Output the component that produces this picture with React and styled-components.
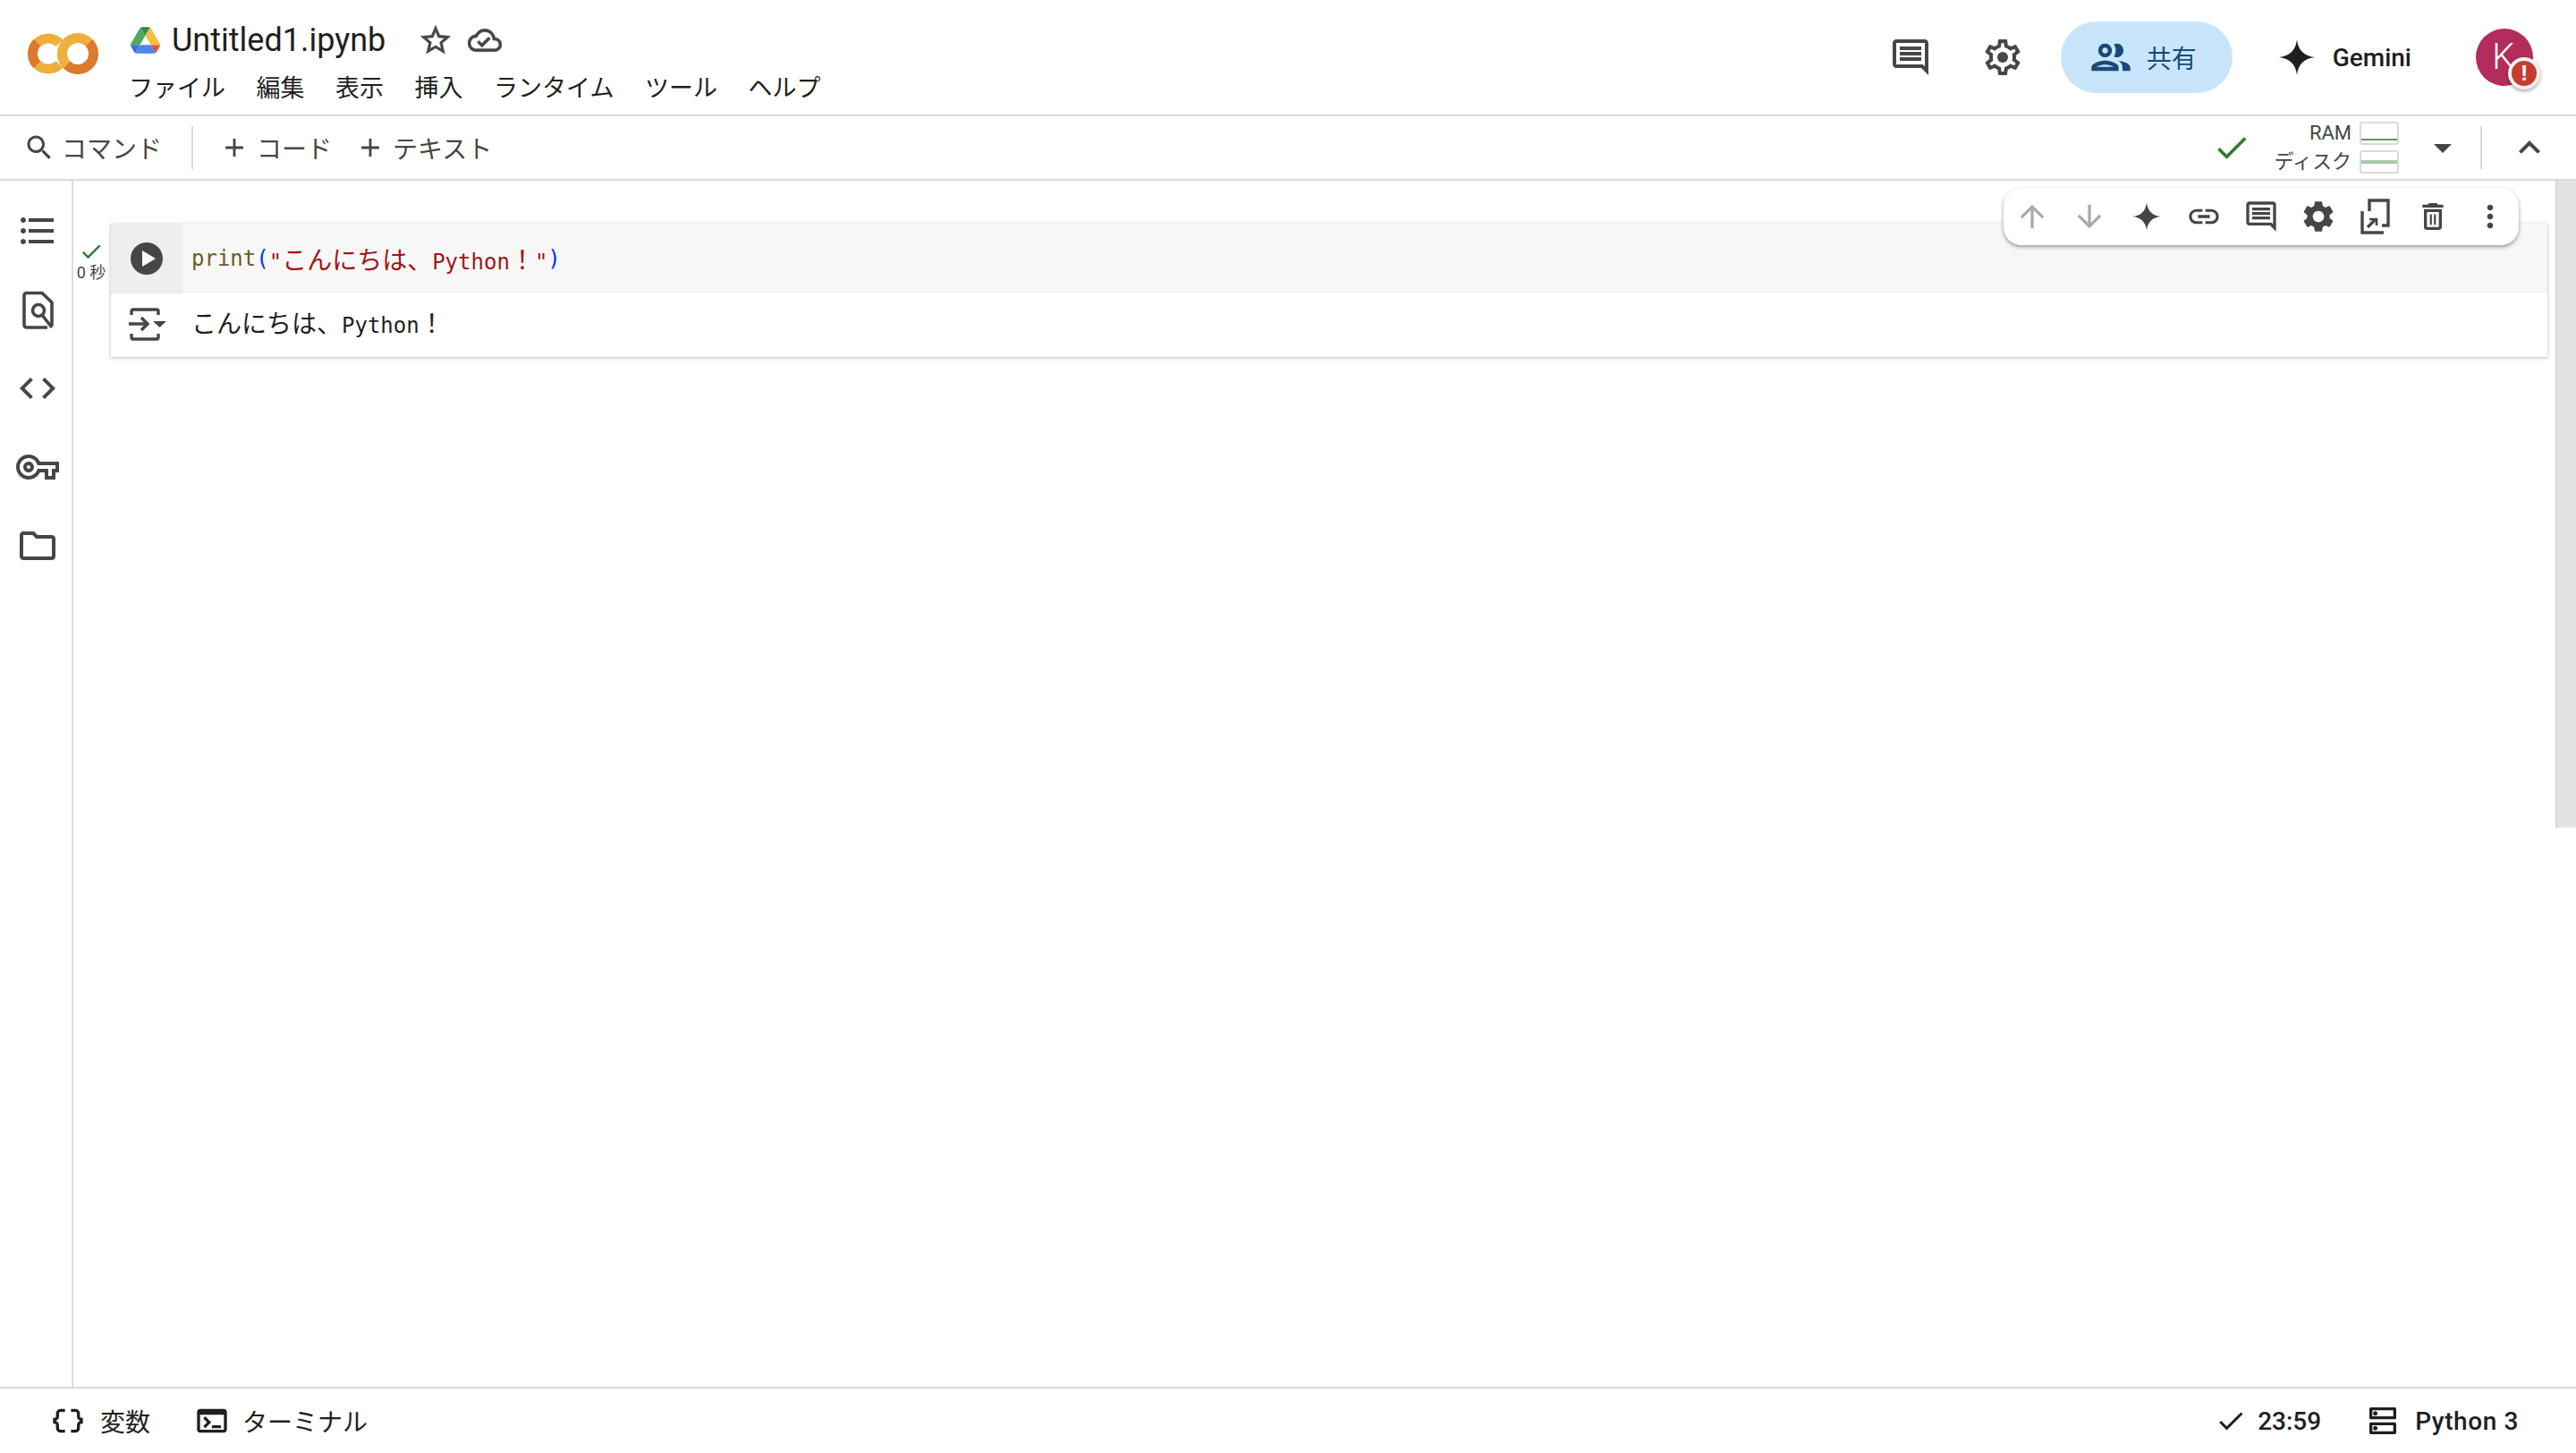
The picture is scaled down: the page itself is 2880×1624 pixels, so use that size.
import React from "react";
import styled, { createGlobalStyle } from "styled-components";

const GlobalStyle = createGlobalStyle`
  html, body { margin: 0; padding: 0; background: #fff; }
  body { font-family: "Roboto", "Noto Sans CJK JP", sans-serif; color: #1f1f1f; }
`;

// material icon paths
const paths = {
  chat: "M21.99 4c0-1.1-.89-2-1.99-2H4c-1.1 0-2 .9-2 2v12c0 1.1.9 2 2 2h14l4 4-.01-18zM20 4v13.17L18.83 16H4V4h16zM6 12h12v2H6zm0-3h12v2H6zm0-3h12v2H6z",
  gear: "M19.43 12.98c.04-.32.07-.64.07-.98 0-.34-.03-.66-.07-.98l2.11-1.65c.19-.15.24-.42.12-.64l-2-3.46c-.09-.16-.26-.25-.44-.25-.06 0-.12.01-.17.03l-2.49 1c-.52-.4-1.08-.73-1.69-.98l-.38-2.65C14.46 2.18 14.25 2 14 2h-4c-.25 0-.46.18-.49.42l-.38 2.65c-.61.25-1.17.59-1.69.98l-2.49-1c-.06-.02-.12-.03-.18-.03-.17 0-.34.09-.43.25l-2 3.46c-.13.22-.07.49.12.64l2.11 1.65c-.04.32-.07.65-.07.98 0 .33.03.66.07.98l-2.11 1.65c-.19.15-.24.42-.12.64l2 3.46c.09.16.26.25.44.25.06 0 .12-.01.17-.03l2.49-1c.52.4 1.08.73 1.69.98l.38 2.65c.03.24.24.42.49.42h4c.25 0 .46-.18.49-.42l.38-2.65c.61-.25 1.17-.59 1.69-.98l2.49 1c.06.02.12.03.18.03.17 0 .34-.09.43-.25l2-3.46c.12-.22.07-.49-.12-.64l-2.11-1.65zm-1.98-1.71c.04.31.05.52.05.73 0 .21-.02.43-.05.73l-.14 1.13.89.7 1.08.84-.7 1.21-1.27-.51-1.04-.42-.9.68c-.43.32-.84.56-1.25.73l-1.06.43-.16 1.13-.2 1.35h-1.4l-.19-1.35-.16-1.13-1.06-.43c-.43-.18-.83-.41-1.23-.71l-.91-.7-1.06.43-1.27.51-.7-1.21 1.08-.84.89-.7-.14-1.13c-.03-.31-.05-.54-.05-.74s.02-.43.05-.73l.14-1.13-.89-.7-1.08-.84.7-1.21 1.27.51 1.04.42.9-.68c.43-.32.84-.56 1.25-.73l1.06-.43.16-1.13.2-1.35h1.39l.19 1.35.16 1.13 1.06.43c.43.18.83.41 1.23.71l.91.7 1.06-.43 1.27-.51.7 1.21-1.07.85-.89.7.14 1.13z",
  gearFill: "M19.14 12.94c.04-.3.06-.61.06-.94 0-.32-.02-.64-.07-.94l2.03-1.58c.18-.14.23-.41.12-.61l-1.92-3.32c-.12-.22-.37-.29-.59-.22l-2.39.96c-.5-.38-1.03-.7-1.62-.94l-.36-2.54c-.04-.24-.24-.41-.48-.41h-3.84c-.24 0-.43.17-.47.41l-.36 2.54c-.59.24-1.13.57-1.62.94l-2.39-.96c-.22-.08-.47 0-.59.22L2.74 8.87c-.12.21-.08.47.12.61l2.03 1.58c-.05.3-.09.63-.09.94s.02.64.07.94l-2.03 1.58c-.18.14-.23.41-.12.61l1.92 3.32c.12.22.37.29.59.22l2.39-.96c.5.38 1.03.7 1.62.94l.36 2.54c.05.24.24.41.48.41h3.84c.24 0 .44-.17.47-.41l.36-2.54c.59-.24 1.13-.56 1.62-.94l2.39.96c.22.08.47 0 .59-.22l1.92-3.32c.12-.22.07-.47-.12-.61l-2.01-1.58zM12 15.6c-1.98 0-3.6-1.62-3.6-3.6s1.62-3.6 3.6-3.6 3.6 1.62 3.6 3.6-1.62 3.6-3.6 3.6z",
  link: "M3.9 12c0-1.71 1.39-3.1 3.1-3.1h4V7H7c-2.76 0-5 2.24-5 5s2.24 5 5 5h4v-1.9H7c-1.71 0-3.1-1.39-3.1-3.1zM8 13h8v-2H8v2zm9-6h-4v1.9h4c1.71 0 3.1 1.39 3.1 3.1s-1.39 3.1-3.1 3.1h-4V17h4c2.76 0 5-2.24 5-5s-2.24-5-5-5z",
  trash: "M6 19c0 1.1.9 2 2 2h8c1.1 0 2-.9 2-2V7H6v12zM8 9h8v10H8V9zm7.5-5l-1-1h-5l-1 1H5v2h14V4zM10 10.5h1.3v7H10zM12.7 10.5H14v7h-1.3z",
  more: "M12 8c1.1 0 2-.9 2-2s-.9-2-2-2-2 .9-2 2 .9 2 2 2zm0 2c-1.1 0-2 .9-2 2s.9 2 2 2 2-.9 2-2-.9-2-2-2zm0 6c-1.1 0-2 .9-2 2s.9 2 2 2 2-.9 2-2-.9-2-2-2z",
  up: "M4 12l1.41 1.41L11 7.83V20h2V7.83l5.58 5.59L20 12l-8-8-8 8z",
  down: "M20 12l-1.41-1.41L13 16.17V4h-2v12.17l-5.58-5.59L4 12l8 8 8-8z",
  star: "M22 9.24l-7.19-.62L12 2 9.19 8.63 2 9.24l5.46 4.73L5.82 21 12 17.27 18.18 21l-1.63-7.03L22 9.24zM12 15.4l-3.76 2.27 1-4.28-3.32-2.88 4.38-.38L12 6.1l1.71 4.04 4.38.38-3.32 2.88 1 4.28L12 15.4z",
  cloud: "M19.35 10.04C18.67 6.59 15.64 4 12 4 9.11 4 6.6 5.64 5.35 8.04 2.34 8.36 0 10.91 0 14c0 3.31 2.69 6 6 6h13c2.76 0 5-2.24 5-5 0-2.64-2.05-4.78-4.65-4.96zM19 18H6c-2.21 0-4-1.79-4-4 0-2.05 1.53-3.76 3.56-3.97l1.07-.11.5-.95C8.08 7.14 9.94 6 12 6c2.62 0 4.88 1.86 5.39 4.43l.3 1.5 1.53.11c1.56.1 2.78 1.41 2.78 2.96 0 1.65-1.35 3-3 3zm-9-3.82l-2.09-2.09L6.5 13.5 10 17l6.01-6.01-1.41-1.41z",
  people: "M9 13.75c-2.34 0-7 1.17-7 3.5V19h14v-1.75c0-2.33-4.66-3.5-7-3.5zM4.34 17c.84-.58 2.87-1.25 4.66-1.25s3.82.67 4.66 1.25H4.34zM9 12c1.93 0 3.5-1.57 3.5-3.5S10.93 5 9 5 5.5 6.57 5.5 8.5 7.07 12 9 12zm0-5c.83 0 1.5.67 1.5 1.5S9.83 10 9 10s-1.5-.67-1.5-1.5S8.17 7 9 7zm7.04 6.81c1.16.84 1.96 1.96 1.96 3.44V19h4v-1.75c0-2.02-3.5-3.17-5.96-3.44zM15 12c1.93 0 3.5-1.57 3.5-3.5S16.93 5 15 5c-.54 0-1.04.13-1.5.35.63.89 1 1.98 1 3.15s-.37 2.26-1 3.15c.46.22.96.35 1.5.35z",
  spark: "M12 2C12.6 8 16 11.4 22 12 16 12.6 12.6 16 12 22 11.4 16 8 12.6 2 12 8 11.4 11.4 8 12 2z",
  list: "M4 10.5c-.83 0-1.5.67-1.5 1.5s.67 1.5 1.5 1.5 1.5-.67 1.5-1.5-.67-1.5-1.5-1.5zm0-6c-.83 0-1.5.67-1.5 1.5S3.17 7.5 4 7.5 5.5 6.83 5.5 6 4.83 4.5 4 4.5zm0 12c-.83 0-1.5.68-1.5 1.5s.68 1.5 1.5 1.5 1.5-.68 1.5-1.5-.67-1.5-1.5-1.5zM7 19h14v-2H7v2zm0-6h14v-2H7v2zm0-8v2h14V5H7z",
  code: "M9.4 16.6L4.8 12l4.6-4.6L8 6l-6 6 6 6 1.4-1.4zm5.2 0l4.6-4.6-4.6-4.6L16 6l6 6-6 6-1.4-1.4z",
  key: "M22 19h-6v-4h-2.68c-1.14 2.42-3.6 4-6.32 4-3.86 0-7-3.14-7-7s3.14-7 7-7c2.72 0 5.17 1.58 6.32 4H24v6h-2v4zm-4-2h2v-4h2v-2H11.94l-.23-.67C11.01 8.34 9.11 7 7 7c-2.76 0-5 2.24-5 5s2.24 5 5 5c2.11 0 4.01-1.34 4.71-3.33l.23-.67H18v4zM7 15c-1.65 0-3-1.35-3-3s1.35-3 3-3 3 1.35 3 3-1.35 3-3 3zm0-4c-.55 0-1 .45-1 1s.45 1 1 1 1-.45 1-1-.45-1-1-1z",
  folder: "M9.17 6l2 2H20v10H4V6h5.17M10 4H4c-1.1 0-1.99.9-1.99 2L2 18c0 1.1.9 2 2 2h16c1.1 0 2-.9 2-2V8c0-1.1-.9-2-2-2h-8l-2-2z",
  search: "M15.5 14h-.79l-.28-.27C15.41 12.59 16 11.11 16 9.5 16 5.91 13.09 3 9.5 3S3 5.91 3 9.5 5.91 16 9.5 16c1.61 0 3.09-.59 4.23-1.57l.27.28v.79l5 4.99L20.49 19l-4.99-5zm-6 0C7.01 14 5 11.99 5 9.5S7.01 5 9.5 5 14 7.01 14 9.5 11.99 14 9.5 14z",
  add: "M19 13h-6v6h-2v-6H5v-2h6V5h2v6h6v2z",
  check: "M9 16.17L4.83 12l-1.42 1.41L9 19 21 7l-1.41-1.41z",
  less: "M12 8l-6 6 1.41 1.41L12 10.83l4.59 4.58L18 14z",
  drop: "M7 10l5 5 5-5z",
  braces: "M4 7v2c0 .55-.45 1-1 1H2v4h1c.55 0 1 .45 1 1v2c0 1.65 1.35 3 3 3h3v-2H7c-.55 0-1-.45-1-1v-2c0-1.3-.84-2.42-2-2.83v-.34C5.16 11.42 6 10.3 6 9V7c0-.55.45-1 1-1h3V4H7C5.35 4 4 5.35 4 7zM21 10c-.55 0-1-.45-1-1V7c0-1.65-1.35-3-3-3h-3v2h3c.55 0 1 .45 1 1v2c0 1.3.84 2.42 2 2.83v.34c-1.16.41-2 1.52-2 2.83v2c0 .55-.45 1-1 1h-3v2h3c1.65 0 3-1.35 3-3v-2c0-.55.45-1 1-1h1v-4h-1z",
  terminal: "M20 4H4c-1.1 0-2 .9-2 2v12c0 1.1.9 2 2 2h16c1.1 0 2-.9 2-2V6c0-1.1-.9-2-2-2zm0 14H4V8h16v10zm-2-1h-6v-2h6v2zM7.5 17l-1.41-1.41L8.67 13l-2.59-2.59L7.5 9l4 4-4 4z",
  dns: "M19 15v4H5v-4h14m1-2H4c-.55 0-1 .45-1 1v6c0 .55.45 1 1 1h16c.55 0 1-.45 1-1v-6c0-.55-.45-1-1-1zM7 18.5c-.82 0-1.5-.67-1.5-1.5s.68-1.5 1.5-1.5 1.5.67 1.5 1.5-.67 1.5-1.5 1.5zM19 5v4H5V5h14m1-2H4c-.55 0-1 .45-1 1v6c0 .55.45 1 1 1h16c.55 0 1-.45 1-1V4c0-.55-.45-1-1-1zM7 8.5c-.82 0-1.5-.67-1.5-1.5S6.18 5.5 7 5.5s1.5.68 1.5 1.5S7.83 8.5 7 8.5z",
};

const Svg = styled.svg`
  display: block;
  flex: none;
  width: ${(p) => p.$size}px;
  height: ${(p) => p.$size}px;
  fill: ${(p) => p.$color};
  stroke: ${(p) => (p.$bold ? p.$color : "none")};
  stroke-width: ${(p) => p.$bold || 0};
`;

const Icon = ({ name, size = 48, color = "#444746", bold, children }) => (
  <Svg viewBox="0 0 24 24" $size={size} $color={color} $bold={bold}>
    <path d={paths[name]} />
    {children}
  </Svg>
);

const ColabLogo = () => (
  <svg width="80" height="46" viewBox="0 0 80 46" fill="none" strokeWidth="11">
    <path d="M35.4 34.9A17.5 17.5 0 0 1 10.6 34.9" stroke="#f0ae3c" />
    <path d="M35.4 11.1A17.5 17.5 0 0 0 10.6 11.1" stroke="#f0ae3c" />
    <path d="M10.6 10.6A17.5 17.5 0 0 0 10.6 35.4" stroke="#dc7a2e" />
    <path d="M43.6 35.4A17.5 17.5 0 1 1 68.4 10.6" stroke="#f0ae3c" />
    <path d="M68.4 10.6A17.5 17.5 0 0 1 43.6 35.4" stroke="#dc7a2e" />
  </svg>
);

const DriveLogo = () => (
  <svg width="33" height="30" viewBox="0 0 87.3 78">
    <path d="m6.6 66.85 3.85 6.65c.8 1.4 1.95 2.5 3.3 3.3l13.75-23.8h-27.5c0 1.55.4 3.1 1.2 4.5z" fill="#3a6fd8" />
    <path d="m43.65 25-13.75-23.8c-1.35.8-2.5 1.9-3.3 3.3l-25.4 44a9.06 9.06 0 0 0 -1.2 4.5h27.5z" fill="#52a85f" />
    <path d="m73.55 76.8c1.35-.8 2.5-1.9 3.3-3.3l1.6-2.75 7.65-13.25c.8-1.4 1.2-2.95 1.2-4.5h-27.502l5.852 11.5z" fill="#e0533f" />
    <path d="m43.65 25 13.75-23.8c-1.35-.8-2.9-1.2-4.5-1.2h-18.5c-1.6 0-3.15.45-4.5 1.2z" fill="#2f8a4a" />
    <path d="m59.8 53h-32.3l-13.75 23.8c1.35.8 2.9 1.2 4.5 1.2h50.8c1.6 0 3.15-.45 4.5-1.2z" fill="#4f86ec" />
    <path d="m73.4 26.5-12.7-22c-.8-1.4-1.95-2.5-3.3-3.3l-13.75 23.8 16.15 28h27.45c0-1.55-.4-3.1-1.2-4.5z" fill="#f2bd42" />
  </svg>
);

const OutputIcon = () => (
  <svg width="48" height="40" viewBox="0 0 48 40" fill="none" stroke="#444746" strokeWidth="3.4">
    <path d="M4 8V4q0-2 2-2H32q2 0 2 2V8" />
    <path d="M1 18H22M15 11L22 18 15 25" />
    <path d="M28 15H43L35.5 22z" fill="#444746" stroke="none" />
    <path d="M4 29V33q0 2 2 2H32q2 0 2-2V29" />
  </svg>
);

const MirrorIcon = () => (
  <svg width="64" height="48" viewBox="-8 0 64 48" fill="none" stroke="#444746" strokeWidth="3.4">
    <path d="M17 18V6H38V34H31" />
    <path d="M9 18V42H33" />
    <path d="M15 36L24 27" />
    <path d="M17 27H25V34" strokeWidth="2.6" />
  </svg>
);

const DocSearch = () => (
  <svg width="48" height="48" viewBox="0 0 48 48" fill="none" stroke="#444746" strokeWidth="3.6">
    <path d="M40 42V16L29 5.5H12q-3 0-3 3V41q0 3 3 3H35" />
    <circle cx="25" cy="25" r="6.5" />
    <path d="M29 30L40 44" />
  </svg>
);

const Page = styled.div`
  width: 2880px;
  height: 1624px;
  display: flex;
  flex-direction: column;
  overflow: hidden;
`;

const Header = styled.header`
  height: 128px;
  flex: none;
  display: flex;
  align-items: center;
  padding: 0 48px 0 31px;
  border-bottom: 2px solid #dadada;
`;

const Brand = styled.div`
  width: 115px;
  flex: none;
  display: flex;
  margin-top: -8px;
`;

const TitleColumn = styled.div`
  display: flex;
  flex-direction: column;
  gap: 12px;
  margin-top: 14px;
`;

const TitleRow = styled.div`
  display: flex;
  align-items: center;
  height: 44px;
`;

const FileName = styled.span`
  font-size: 36px;
  line-height: 44px;
  margin-left: 13px;
  color: #1f1f1f;
`;

const TitleIcons = styled.div`
  display: flex;
  align-items: center;
  gap: 16px;
  margin-left: 36px;
`;

const MenuBar = styled.nav`
  display: flex;
  gap: 34.5px;
  margin-left: -2px;
`;

const MenuItem = styled.span`
  font-size: 27px;
  line-height: 40px;
  color: #1f1f1f;
`;

const HeaderRight = styled.div`
  margin-left: auto;
  display: flex;
  align-items: center;
`;

const HeaderIcon = styled.div`
  margin-right: ${(p) => p.$gap}px;
`;

const ShareButton = styled.div`
  width: 192px;
  height: 80px;
  border-radius: 40px;
  background: #c9e5fb;
  display: flex;
  align-items: center;
  gap: 14px;
  padding-left: 30px;
  box-sizing: border-box;
  color: #174a78;
  font-size: 28px;
`;

const GeminiButton = styled.div`
  display: flex;
  align-items: center;
  gap: 16px;
  margin: 0 72px 0 48px;
  font-size: 28px;
  font-weight: 500;
  color: #1f1f1f;
`;

const Avatar = styled.div`
  position: relative;
  width: 64px;
  height: 64px;
  border-radius: 50%;
  background: #b22d5b;
  color: #fff;
  font-size: 40px;
  font-weight: 300;
  line-height: 64px;
  text-align: center;
  text-indent: -2px;
`;

const AlertBadge = styled.div`
  position: absolute;
  right: -8px;
  bottom: -4px;
  width: 28px;
  height: 28px;
  border-radius: 50%;
  background: #c63d2f;
  border: 4px solid #f1f1f1;
  box-shadow: 0 2px 4px rgba(0, 0, 0, 0.35);
  color: #fff;
  font-size: 24px;
  font-weight: 700;
  line-height: 28px;
  text-indent: 0;
`;

const Toolbar = styled.div`
  height: 70px;
  flex: none;
  display: flex;
  align-items: center;
  padding-left: 26px;
  border-bottom: 2px solid #dadada;
  color: #444746;
  font-size: 28px;
`;

const ToolButton = styled.div`
  display: flex;
  align-items: center;
  gap: ${(p) => p.$gap}px;
  margin: 0 ${(p) => p.$right}px 0 ${(p) => p.$left || 0}px;
`;

const Divider = styled.div`
  width: 2px;
  height: 48px;
  background: #dadada;
  flex: none;
  margin-left: ${(p) => p.$left || 0}px;
`;

const ToolbarRight = styled.div`
  margin-left: auto;
  display: flex;
  align-items: center;
  padding-right: 28px;
`;

const Meters = styled.div`
  display: grid;
  grid-template-columns: auto 44px;
  column-gap: 9px;
  row-gap: 6px;
  align-items: center;
  justify-items: end;
  margin: 0 25px 0 26px;
  font-size: 22px;
  line-height: 26px;
`;

const MeterBox = styled.div`
  width: 44px;
  height: 26px;
  box-sizing: border-box;
  border: 2px solid #dadada;
  border-radius: 3px;
  display: flex;
  align-items: ${(p) => p.$align};
  padding-bottom: ${(p) => p.$pad}px;
`;

const MeterLine = styled.div`
  width: 100%;
  height: ${(p) => p.$h}px;
  background: ${(p) => p.$color};
`;

const Body = styled.div`
  flex: 1;
  min-height: 0;
  display: flex;
`;

const Sidebar = styled.aside`
  width: 76px;
  flex: none;
  border-right: 2px solid #dadada;
  display: flex;
  flex-direction: column;
  align-items: center;
  gap: 40px;
  padding: 32px 0 0 4px;
`;

const Content = styled.main`
  flex: 1;
  display: flex;
  align-items: flex-start;
  padding: 48px 9px 0 1px;
`;

const Status = styled.div`
  width: 38px;
  flex: none;
  margin: 17px 3px 0 0;
  display: flex;
  flex-direction: column;
  align-items: center;
  font-size: 18px;
  line-height: 20px;
  color: #444746;
`;

const Cell = styled.section`
  flex: 1;
  position: relative;
  box-shadow: 0 1px 4px rgba(0, 0, 0, 0.28);
  background: #fff;
`;

const CodeRow = styled.div`
  display: flex;
  height: 78px;
  background: #f7f7f7;
`;

const OutputRow = styled.div`
  display: flex;
  height: 71px;
`;

const Gutter = styled.div`
  width: 80px;
  flex: none;
  display: flex;
  align-items: center;
  justify-content: center;
  background: ${(p) => p.$bg};
  padding-left: ${(p) => p.$shift || 0}px;
  box-sizing: border-box;
`;

const PlayCircle = styled.div`
  width: 36px;
  height: 36px;
  border-radius: 50%;
  background: #444746;
  display: flex;
  align-items: center;
  justify-content: center;
`;

const PlayTriangle = styled.div`
  width: 0;
  height: 0;
  margin-left: 4px;
  border-style: solid;
  border-width: 9px 0 9px 15px;
  border-color: transparent transparent transparent #fff;
`;

const CodeLine = styled.div`
  margin-left: 10px;
  padding-bottom: ${(p) => p.$lift || 0}px;
  display: flex;
  align-items: center;
  font-family: "DejaVu Sans Mono", "Noto Sans CJK JP", monospace;
  font-size: 24px;
  white-space: pre;
  color: #1f1f1f;
`;

const Token = styled.span`
  color: ${(p) => p.$color || "inherit"};
`;

const Wide = styled.span`
  font-family: "Noto Sans CJK JP", sans-serif;
  font-size: 28px;
`;

const CellToolbar = styled.div`
  position: absolute;
  top: -40px;
  right: 32px;
  display: flex;
  align-items: center;
  height: 64px;
  background: #fff;
  border-radius: 20px;
  box-shadow: 0 2px 4px rgba(0, 0, 0, 0.4);
`;

const CellTool = styled.div`
  width: 64px;
  height: 64px;
  display: flex;
  align-items: center;
  justify-content: center;
`;

const ScrollTrack = styled.div`
  width: 23px;
  flex: none;
`;

const ScrollThumb = styled.div`
  height: 723px;
  background: #e2e2e2;
  border-left: 2px solid #d4d4d4;
  box-sizing: border-box;
`;

const Footer = styled.footer`
  height: 72px;
  flex: none;
  border-top: 2px solid #dadada;
  display: flex;
  align-items: center;
  padding: 0 64px 0 56px;
  font-size: 28px;
  color: #1f1f1f;
`;

const FooterItem = styled.div`
  display: flex;
  align-items: center;
  gap: ${(p) => p.$gap}px;
  margin-right: ${(p) => p.$right}px;
  font-weight: ${(p) => p.$weight || 400};
  letter-spacing: ${(p) => p.$spacing || 0}px;
`;

const FooterRight = styled.div`
  margin-left: auto;
  display: flex;
  align-items: center;
`;

const menus = ["ファイル", "編集", "表示", "挿入", "ランタイム", "ツール", "ヘルプ"];
const sideIcons = ["list", "doc", "code", "key", "folder"];

function App() {
  return (
    <Page>
      <GlobalStyle />
      <Header>
        <Brand>
          <ColabLogo />
        </Brand>
        <TitleColumn>
          <TitleRow>
            <DriveLogo />
            <FileName>Untitled1.ipynb</FileName>
            <TitleIcons>
              <Icon name="star" size={40} bold={0.3} />
              <Icon name="cloud" size={38} bold={0.3} />
            </TitleIcons>
          </TitleRow>
          <MenuBar>
            {menus.map((m) => (
              <MenuItem key={m}>{m}</MenuItem>
            ))}
          </MenuBar>
        </TitleColumn>
        <HeaderRight>
          <HeaderIcon $gap={55}>
            <Icon name="chat" />
          </HeaderIcon>
          <HeaderIcon $gap={41}>
            <Icon name="gear">
              <circle cx="12" cy="12" r="3" />
            </Icon>
          </HeaderIcon>
          <ShareButton>
            <Icon name="people" size={52} color="#174a78" />
            共有
          </ShareButton>
          <GeminiButton>
            <Icon name="spark" color="#1f1f1f" />
            Gemini
          </GeminiButton>
          <Avatar>
            K
            <AlertBadge>!</AlertBadge>
          </Avatar>
        </HeaderRight>
      </Header>

      <Toolbar>
        <ToolButton $gap={7} $right={33}>
          <Icon name="search" size={36} />
          コマンド
        </ToolButton>
        <Divider />
        <ToolButton $gap={8} $right={26} $left={29}>
          <Icon name="add" size={34} />
          コード
        </ToolButton>
        <ToolButton $gap={8} $right={0}>
          <Icon name="add" size={34} />
          テキスト
        </ToolButton>
        <ToolbarRight>
          <Icon name="check" size={44} color="#2e7d32" />
          <Meters>
            <span>RAM</span>
            <MeterBox $align="flex-end" $pad={3}>
              <MeterLine $h={2} $color="#5c9a63" />
            </MeterBox>
            <span>ディスク</span>
            <MeterBox $align="center" $pad={0}>
              <MeterLine $h={4} $color="#a9cba9" />
            </MeterBox>
          </Meters>
          <Icon name="drop" />
          <Divider $left={18} />
          <ToolButton $gap={0} $right={0} $left={29}>
            <Icon name="less" />
          </ToolButton>
        </ToolbarRight>
      </Toolbar>

      <Body>
        <Sidebar>
          {sideIcons.map((n) => (n === "doc" ? <DocSearch key={n} /> : <Icon key={n} name={n} />))}
        </Sidebar>
        <Content>
          <Status>
            <Icon name="check" size={28} color="#2e7d32" />
            <span>0 秒</span>
          </Status>
          <Cell>
            <CellToolbar>
              <CellTool><Icon name="up" size={40} color="#ababab" /></CellTool>
              <CellTool><Icon name="down" size={40} color="#ababab" /></CellTool>
              <CellTool><Icon name="spark" size={38} /></CellTool>
              <CellTool><Icon name="link" size={40} /></CellTool>
              <CellTool><Icon name="chat" size={40} /></CellTool>
              <CellTool><Icon name="gearFill" size={42} /></CellTool>
              <CellTool><MirrorIcon /></CellTool>
              <CellTool><Icon name="trash" size={40} /></CellTool>
              <CellTool><Icon name="more" size={40} /></CellTool>
            </CellToolbar>
            <CodeRow>
              <Gutter $bg="#eeeeee">
                <PlayCircle>
                  <PlayTriangle />
                </PlayCircle>
              </Gutter>
              <CodeLine>
                <Token $color="#6d5a26">print</Token>
                <Token $color="#0431fa">(</Token>
                <Token $color="#a31515">
                  "<Wide>こんにちは、</Wide>Python<Wide>！</Wide>"
                </Token>
                <Token $color="#0431fa">)</Token>
              </CodeLine>
            </CodeRow>
            <OutputRow>
              <Gutter $bg="#fff" $shift={6}>
                <OutputIcon />
              </Gutter>
              <CodeLine $lift={8}>
                <Token>
                  <Wide>こんにちは、</Wide>Python<Wide>！</Wide>
                </Token>
              </CodeLine>
            </OutputRow>
          </Cell>
        </Content>
        <ScrollTrack>
          <ScrollThumb />
        </ScrollTrack>
      </Body>

      <Footer>
        <FooterItem $gap={16} $right={49}>
          <Icon name="braces" size={40} color="#1f1f1f" />
          変数
        </FooterItem>
        <FooterItem $gap={14} $right={0}>
          <Icon name="terminal" size={40} color="#1f1f1f" />
          ターミナル
        </FooterItem>
        <FooterRight>
          <FooterItem $gap={12} $right={49} $weight={500}>
            <Icon name="check" size={36} color="#1f1f1f" />
            23:59
          </FooterItem>
          <FooterItem $gap={16} $right={0} $weight={500} $spacing={0.6}>
            <Icon name="dns" size={40} color="#1f1f1f" />
            Python 3
          </FooterItem>
        </FooterRight>
      </Footer>
    </Page>
  );
}

export default App;
